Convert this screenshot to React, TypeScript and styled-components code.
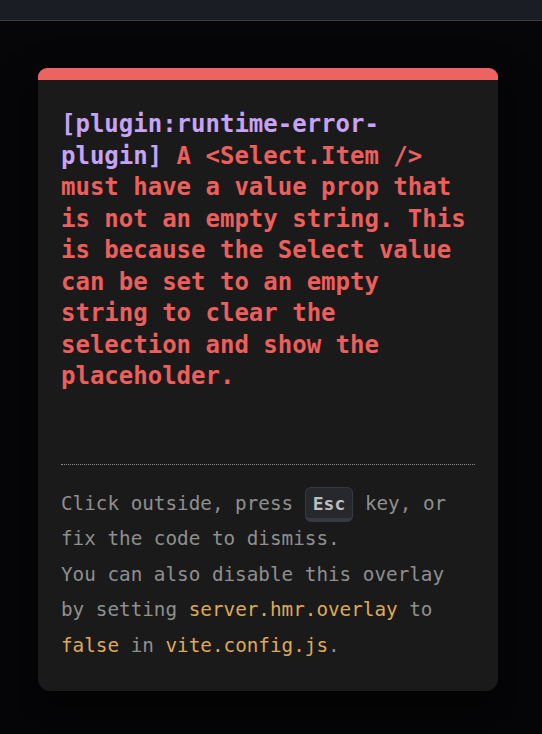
import React from "react";
import styled, { createGlobalStyle } from "styled-components";

const GlobalStyle = createGlobalStyle`
  html, body {
    margin: 0;
    padding: 0;
    background: #060608;
  }
  body {
    min-height: 734px;
    font-family: "DejaVu Sans Mono", "Liberation Mono", monospace;
  }
`;

const Page = styled.div`
  min-height: 734px;
  display: flex;
  flex-direction: column;
  background: #060608;
`;

const TopBar = styled.div`
  height: 20px;
  background: #1b1d24;
  border-bottom: 1px solid #3a3c44;
`;

const Backdrop = styled.div`
  flex: 1;
  padding: 47px 0 0 38px;
`;

const Window = styled.div`
  box-sizing: border-box;
  width: 460px;
  padding: 29px 23px 28px;
  background: #1a1a1a;
  border-top: 12px solid #ec6461;
  border-radius: 9px 9px 12px 12px;
  box-shadow: 0 28px 57px rgba(0, 0, 0, 0.3), 0 22px 18px rgba(0, 0, 0, 0.22);
  font-family: "DejaVu Sans Mono", "Liberation Mono", monospace;
  color: #d8d8d8;
`;

const Message = styled.pre`
  margin: 0 0 71px;
  font-family: inherit;
  font-size: 24px;
  line-height: 31.5px;
  font-weight: 700;
  white-space: pre-wrap;
`;

const Plugin = styled.span`
  color: #c7a3f5;
`;

const Body = styled.span`
  color: #ec5f5c;
`;

const Tip = styled.div`
  border-top: 1px dotted #8c8c8c;
  padding-top: 21px;
  font-size: 19.3px;
  line-height: 35.5px;
  color: #8f8f8f;
`;

const Kbd = styled.kbd`
  font-family: "DejaVu Sans Mono", "Liberation Mono", monospace;
  font-size: 18px;
  font-weight: 700;
  line-height: 1.5;
  background: #26282c;
  color: #bcbdc1;
  padding: 4.5px 7px;
  border-radius: 6px;
  border-style: solid;
  border-color: #363940;
  border-width: 1.5px 1.5px 4.5px;
`;

const Code = styled.code`
  font-family: inherit;
  font-size: inherit;
  color: #dfa957;
`;

export default function App() {
  return (
    <>
      <GlobalStyle />
      <Page>
        <TopBar />
        <Backdrop>
          <Window>
            <Message>
              <Plugin>[plugin:runtime-error-plugin] </Plugin>
              <Body>
                A &lt;Select.Item /&gt; must have a value prop that is not an empty string. This is because the Select value can be set to an empty string to clear the selection and show the placeholder.
              </Body>
            </Message>
            <Tip>
              Click outside, press <Kbd>Esc</Kbd> key, or fix the code to dismiss.
              <br />
              You can also disable this overlay by setting <Code>server.hmr.overlay</Code> to{" "}
              <Code>false</Code> in <Code>vite.config.js</Code>.
            </Tip>
          </Window>
        </Backdrop>
      </Page>
    </>
  );
}
